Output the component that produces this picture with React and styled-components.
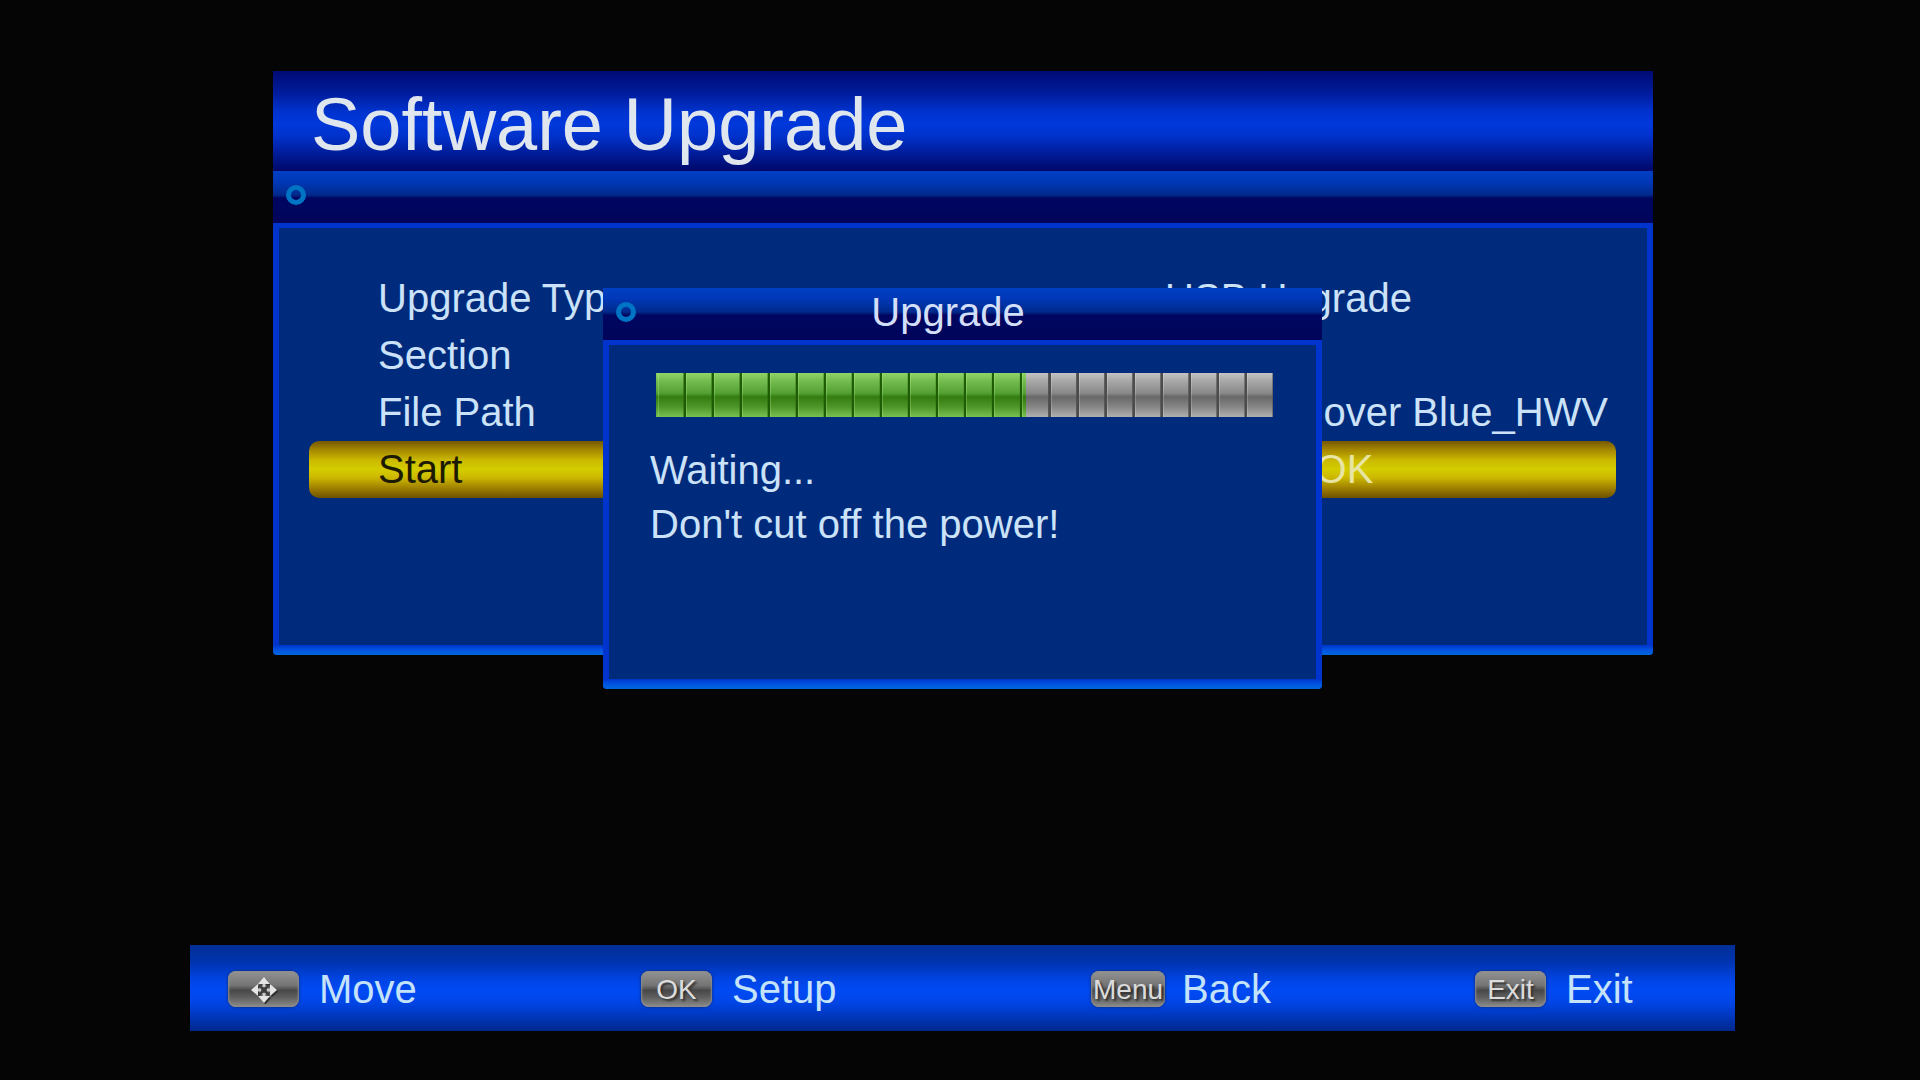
import React from "react";
import styled, { createGlobalStyle, css } from "styled-components";

const GlobalStyle = createGlobalStyle`
  *, *::before, *::after { box-sizing: border-box; }
  html, body { margin: 0; background: #050505; }
  body {
    font-family: "Liberation Sans", Arial, sans-serif;
    font-size: 40px;
    font-variant-ligatures: none;
    color: #cbe2f8;
  }
`;

const Screen = styled.div`
  display: flex;
  flex-direction: column;
  min-height: 100vh;
  padding: 71px 0 49px;
  background: #050505;
`;

const Main = styled.main`
  position: relative;
  margin: 0 267px 48px 273px;
`;

const TitleBar = styled.header`
  display: flex;
  align-items: center;
  height: 100px;
  padding: 8px 38px 0;
  background: linear-gradient(#000b74 0%, #001c9c 22%, #0032cc 40%, #0038dc 52%, #0032cc 65%, #001a94 84%, #000868 100%);
`;

const Title = styled.h1`
  margin: 0;
  font-size: 74px;
  line-height: 84px;
  font-weight: 400;
  color: #dfe6ee;
  white-space: nowrap;
`;

const WindowBar = styled.div`
  display: grid;
  grid-template-columns: 20px 1fr 20px;
  align-items: center;
  height: 52px;
  padding: 0 ${(p) => (p.$dialog ? "42px" : "13px")} 4px 13px;
  background: linear-gradient(#0040c4 0%, #0038b8 20%, #002a8c 46%, #000660 52%, #00045a 100%);
`;

const Ring = styled.span`
  width: 20px;
  height: 20px;
  border: 5px solid #0074c4;
  border-radius: 50%;
`;

const WindowTitle = styled.h2`
  margin: 0;
  font-size: 40px;
  line-height: 48px;
  font-weight: 400;
  text-align: center;
  color: #d3dff8;
`;

const WindowBody = styled.div`
  position: relative;
  min-height: ${(p) => p.$minHeight}px;
  padding: ${(p) => p.$padding};
  background: #002b7c;
  border: solid #0034cc;
  border-width: 5px 6px 0;
  border-radius: 0 0 4px 4px;

  &::after {
    content: "";
    position: absolute;
    left: -6px;
    right: -6px;
    bottom: 0;
    height: 10px;
    border-radius: 0 0 4px 4px;
    background: linear-gradient(#0034c8, #004ee0 40%, #0068dc);
  }
`;

const Settings = styled.ul`
  margin: 0;
  padding: 0;
  list-style: none;
`;

const rowStyle = css`
  display: grid;
  grid-template-columns: 1fr 1fr;
  align-items: center;
  width: 100%;
  height: 57px;
  margin: 0;
  padding: 0 8px 0 69px;
  border: 0;
  font: inherit;
  line-height: 57px;
  text-align: left;
  color: inherit;
  background: none;
`;

const Row = styled.div`
  ${rowStyle}
`;

const SelectedRow = styled.button`
  ${rowStyle}
  border-radius: 10px;
  color: #1c1a00;
  background: linear-gradient(#745800 0%, #a68800 16%, #ccbc00 35%, #d4cc00 50%, #ccb800 64%, #9c7c00 84%, #6c5000 100%);
`;

const Value = styled.span`
  text-align: ${(p) => p.$align || "center"};
  padding: 0 ${(p) => p.$after || 0}px 0 ${(p) => p.$before || 0}px;
  white-space: nowrap;
  color: ${(p) => (p.$selected ? "#e8e4a4" : "inherit")};
`;

const Dialog = styled.section`
  position: absolute;
  top: 217px;
  left: 330px;
  right: 331px;
`;

/* Twenty-two cells across the track; the filled part spans 60% of them. */
const greyCells = css`
  background:
    repeating-linear-gradient(90deg, #ffffff33 0 1px, transparent 1px calc(100% / 22 - 3px), #4c4c4c calc(100% / 22 - 2px) calc(100% / 22)) 2px 0 no-repeat,
    linear-gradient(#c4c4c4 0%, #a8a8a8 18%, #888888 46%, #686868 54%, #848484 76%, #b0b0b0 100%);
`;

const greenCells = css`
  background:
    repeating-linear-gradient(90deg, #c8ff9844 0 1px, transparent 1px calc(100% / 13.2 - 3px), #1f5c06 calc(100% / 13.2 - 2px) calc(100% / 13.2)) 2px 0 no-repeat,
    linear-gradient(#90d468 0%, #74bc50 18%, #54a034 46%, #347c10 54%, #4c9428 76%, #78c050 100%);
`;

const Progress = styled.progress`
  appearance: none;
  display: block;
  width: 100%;
  height: 44px;
  border: 0;

  &::-webkit-progress-bar { ${greyCells} }
  &::-webkit-progress-value { ${greenCells} }
`;

const Message = styled.p`
  margin: 26px -6px 0;
  line-height: 54px;
`;

const HelpBar = styled.footer`
  display: grid;
  grid-template-columns: 413fr 450fr 384fr 260fr;
  align-items: center;
  height: 86px;
  margin: auto 185px 0 190px;
  padding: 2px 0 0 38px;
  background: linear-gradient(#002e94 0%, #0034b0 20%, #0044e4 40%, #004af4 54%, #0044e4 68%, #0034b4 86%, #00288c 100%);
`;

const Hint = styled.button`
  display: grid;
  grid-template-columns: 91px auto;
  justify-content: start;
  align-items: center;
  padding: 0;
  border: 0;
  background: none;
  font: inherit;
  line-height: 46px;
  text-align: left;
  color: #c4e2fa;
`;

const Key = styled.kbd`
  display: flex;
  align-items: center;
  justify-content: center;
  justify-self: start;
  min-width: 71px;
  height: 36px;
  padding: 2px 2px 0;
  border-radius: 8px;
  font-family: inherit;
  font-size: 28px;
  line-height: 32px;
  color: #dcdcdc;
  text-shadow: 2px 2px 2px #333333;
  background: linear-gradient(#949494 0%, #747474 40%, #484848 54%, #606060 74%, #8c8c8c 100%);
  box-shadow: inset 0 0 2px 1px #8c8c8c, 0 0 3px #10285c;
`;

const ArrowsIcon = () => (
  <svg width="28" height="28" viewBox="0 0 28 28" aria-hidden="true">
    <g fill="#303030" transform="translate(1.5 1.5)">
      <path d="M14 1l6 7H8zM14 27l6-7H8zM1 14l7-6v12zM27 14l-7-6v12z" />
    </g>
    <path d="M9 9h10v10H9z" fill="#5c5c5c" />
    <path d="M9 9l10 10M19 9L9 19" stroke="#3c3c3c" strokeWidth="2" />
    <path d="M12.500 8h3v3h-3zM12.500 17h3v3h-3zM8 12.500h3v3H8zM17 12.500h3v3h-3z" fill="#c8c8c8" />
    <path d="M14 1l6 7H8zM14 27l6-7H8zM1 14l7-6v12zM27 14l-7-6v12z" fill="#e4e4e4" />
  </svg>
);

const hints = [
  { key: <ArrowsIcon />, label: "Move" },
  { key: "OK", label: "Setup" },
  { key: "Menu", label: "Back" },
  { key: "Exit", label: "Exit" },
];

export default function App() {
  return (
    <Screen>
      <GlobalStyle />
      <Main>
        <TitleBar>
          <Title>Software Upgrade</Title>
        </TitleBar>
        <WindowBar>
          <Ring />
        </WindowBar>
        <WindowBody $minHeight={432} $padding="42px 31px 0 30px">
          <Settings>
            <li>
              <Row>
                <span>Upgrade Type</span>
                <Value $after={24}>USB Upgrade</Value>
              </Row>
            </li>
            <li>
              <Row>
                <span>Section</span>
              </Row>
            </li>
            <li>
              <Row>
                <span>File Path</span>
                <Value $align="right">over Blue_HWV</Value>
              </Row>
            </li>
            <li>
              <SelectedRow type="button">
                <span>Start</span>
                <Value $before={88} $selected>OK</Value>
              </SelectedRow>
            </li>
          </Settings>
        </WindowBody>
        <Dialog role="dialog" aria-labelledby="upgrade-title">
          <WindowBar $dialog>
            <Ring />
            <WindowTitle id="upgrade-title">Upgrade</WindowTitle>
          </WindowBar>
          <WindowBody $minHeight={349} $padding="28px 43px 0 47px">
            <Progress value={60} max={100} aria-label="Upgrade progress" />
            <Message>
              Waiting...
              <br />
              Don't cut off the power!
            </Message>
          </WindowBody>
        </Dialog>
      </Main>
      <HelpBar>
        {hints.map((hint) => (
          <Hint type="button" key={hint.label}>
            <Key>{hint.key}</Key>
            <span>{hint.label}</span>
          </Hint>
        ))}
      </HelpBar>
    </Screen>
  );
}
